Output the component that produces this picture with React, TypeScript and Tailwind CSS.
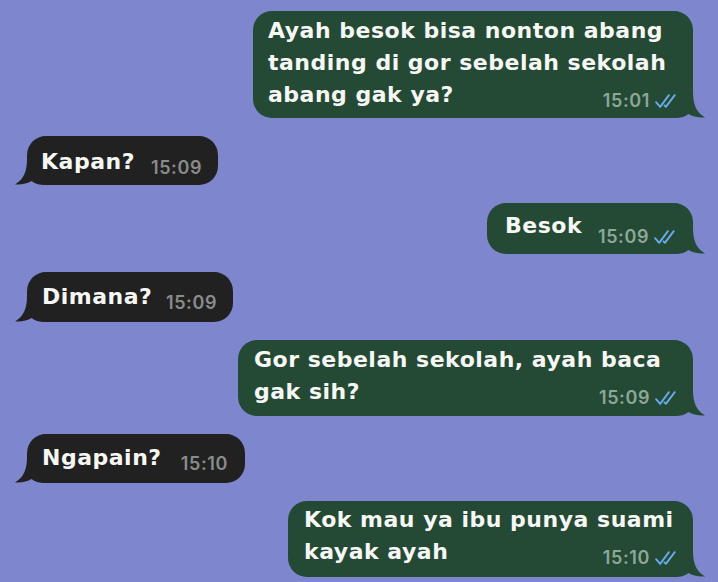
import React from "react";

function Checks() {
  return (
    <svg width="24" height="14" viewBox="0 0 19 12" fill="none" className="shrink-0">
      <path d="M1 7 L4.5 11 L12 1" stroke="#6aaaea" strokeWidth="1.6" strokeLinecap="round" strokeLinejoin="round" />
      <path d="M8.2 9.8 L9.4 11 L17 1" stroke="#6aaaea" strokeWidth="1.6" strokeLinecap="round" strokeLinejoin="round" />
    </svg>
  );
}

function Tail({ color, left }: { color: string; left?: boolean }) {
  return (
    <svg
      width="30"
      height="26"
      viewBox="0 0 30 26"
      className={left ? "absolute bottom-0 left-[-12px] -scale-x-100" : "absolute bottom-0 right-[-12px]"}
    >
      <path d="M0 0 H18 C18 12 21 20 30 25.5 C23 26 17.5 24.5 13.5 22 C9.5 25 5 26 0 26 Z" fill={color} />
    </svg>
  );
}

type B = {
  side: "l" | "r";
  lines: string[];
  time: string;
  cls: string;
  timeCls?: string;
};

const GREEN = "#244a36";
const DARK = "#212121";

const bubbles: B[] = [
  {
    side: "r",
    lines: ["Ayah besok bisa nonton abang", "tanding di gor sebelah sekolah", "abang gak ya?"],
    time: "15:01",
    cls: "w-[440px] pl-[15px] pr-[15px] pt-[4px] pb-[7px]",
  },
  { side: "l", lines: ["Kapan?"], time: "15:09", cls: "w-[191px] pl-[14px] pr-[16px] pt-[10px] pb-[7px]" },
  {
    side: "r",
    lines: ["Besok"],
    time: "15:09",
    cls: "w-[206px] pl-[18px] pr-[16px] pt-[7px] pb-[12px]",
    timeCls: "mb-[-5px]",
  },
  { side: "l", lines: ["Dimana?"], time: "15:09", cls: "w-[206px] pl-[15px] pr-[16px] pt-[9px] pb-[9px]" },
  {
    side: "r",
    lines: ["Gor sebelah sekolah, ayah baca", "gak sih?"],
    time: "15:09",
    cls: "w-[455px] pl-[16px] pr-[15px] pt-[4px] pb-[8px]",
  },
  { side: "l", lines: ["Ngapain?"], time: "15:10", cls: "w-[218px] pl-[15px] pr-[17px] pt-[8px] pb-[9px]" },
  {
    side: "r",
    lines: ["Kok mau ya ibu punya suami", "kayak ayah"],
    time: "15:10",
    cls: "w-[405px] pl-[16px] pr-[15px] pt-[3px] pb-[9px]",
  },
];

function Bubble({ b }: { b: B }) {
  const right = b.side === "r";
  const color = right ? GREEN : DARK;
  const last = b.lines[b.lines.length - 1];
  const rest = b.lines.slice(0, -1);
  const txt =
    "text-[22px] leading-[32px] font-bold whitespace-nowrap font-['DejaVu_Sans',sans-serif] tracking-[0.5px]";
  return (
    <div
      className={
        "relative rounded-[19px] text-[#f7f7f5] " +
        b.cls +
        (right ? " self-end bg-[#244a36]" : " self-start bg-[#212121]")
      }
    >
      <Tail color={color} left={!right} />
      <div className="relative">
        {rest.map((l, i) => (
          <div key={i} className={txt}>
            {l}
          </div>
        ))}
        <div className="flex items-end justify-between gap-[12px]">
          <span className={txt}>{last}</span>
          <span
            className={
              "flex items-center gap-[4px] text-[18px] leading-[20px] font-semibold tracking-[0.6px] whitespace-nowrap " +
              (right ? "text-[#8ea796] " : "text-[#8b8b8b] ") +
              (b.timeCls ?? "")
            }
          >
            {b.time}
            {right && <Checks />}
          </span>
        </div>
      </div>
    </div>
  );
}

export default function App() {
  return (
    <div
      className="w-[718px] h-[582px] overflow-hidden bg-[#7e87cd] flex flex-col gap-[18px] pt-[11px] pl-[27px] pr-[25px]"
      style={{ fontFamily: "Inter, 'Noto Sans', sans-serif" }}
    >
      {bubbles.map((b, i) => (
        <Bubble key={i} b={b} />
      ))}
    </div>
  );
}
